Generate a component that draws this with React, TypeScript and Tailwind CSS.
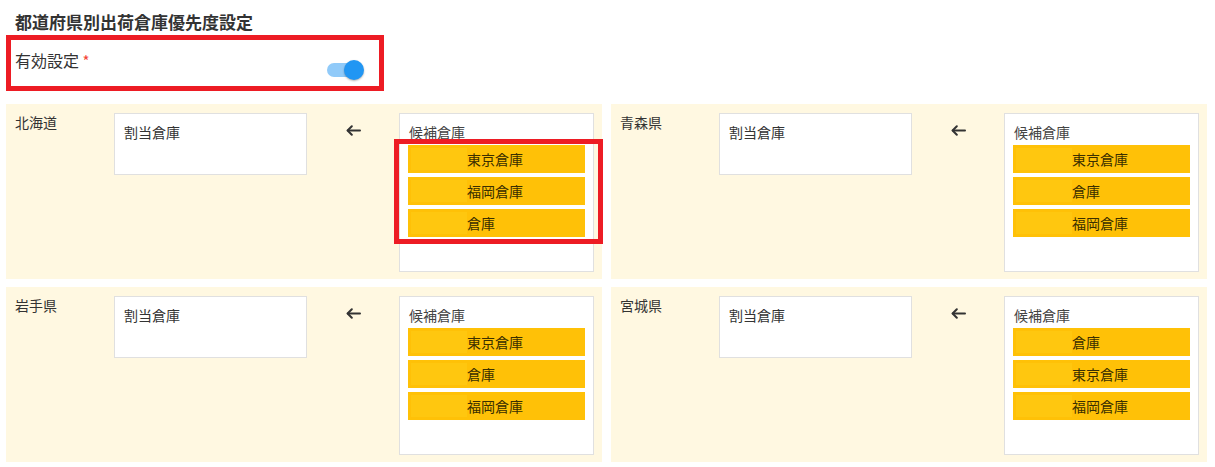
const font = "font-['Noto_Sans_CJK_JP','Noto_Sans',sans-serif]";

type Pref = { name: string; candidates: string[] };

const prefs: Pref[] = [
  { name: "北海道", candidates: ["東京倉庫", "福岡倉庫", "倉庫"] },
  { name: "青森県", candidates: ["東京倉庫", "倉庫", "福岡倉庫"] },
  { name: "岩手県", candidates: ["東京倉庫", "倉庫", "福岡倉庫"] },
  { name: "宮城県", candidates: ["倉庫", "東京倉庫", "福岡倉庫"] },
];

function ArrowLeft() {
  return (
    <svg width="15" height="11" viewBox="0 0 15 11" fill="none" stroke="#333" strokeWidth="2" strokeLinecap="round" strokeLinejoin="round">
      <path d="M14 5.5H1.8" />
      <path d="M5.8 1.3 1.6 5.5l4.2 4.2" />
    </svg>
  );
}

function Toggle() {
  return (
    <div className="relative w-[37px] h-[20px]">
      <div className="absolute left-0 top-[3px] w-[34px] h-[14px] rounded-full bg-[#90caf9]" />
      <div className="absolute right-0 top-0 w-5 h-5 rounded-full bg-[#2196f3] shadow-[0_1px_2px_rgba(0,0,0,0.3)]" />
    </div>
  );
}

function PrefPanel({ pref }: { pref: Pref }) {
  return (
    <div className="h-[175px] bg-[#fff8e1] pl-[9px] pt-[9px] grid grid-cols-[99px_193px_92px_195px] items-start">
      <div className="text-[14px] leading-[18px] text-[#333]">{pref.name}</div>
      <div className="h-[62px] bg-white border border-[#e0e0e0] px-[9px] pt-[8px] text-[14px] leading-[20px] text-[#333]">
        割当倉庫
      </div>
      <div className="flex justify-center pt-[12px]">
        <ArrowLeft />
      </div>
      <div className="h-[159px] bg-white border border-[#e0e0e0] px-[8px] pt-[8px]">
        <div className="pl-[1px] text-[14px] leading-[20px] text-[#444]">候補倉庫</div>
        <div className="mt-[3px] flex flex-col gap-[4px]">
          {pref.candidates.map((c, i) => (
            <div key={i} className="h-[28px] bg-[#ffc107] flex items-center pl-[3px]">
              <div className="w-[56px] h-[22px] bg-[#ffc70f]" />
              <span className="text-[14px] leading-[20px] text-[#3a2f00]">{c}</span>
            </div>
          ))}
        </div>
      </div>
    </div>
  );
}

export default function App() {
  return (
    <div className={`relative w-[1215px] h-[467px] bg-white ${font}`}>
      <div className="h-[35px] pl-[15px] pt-[10px] text-[17px] leading-[24px] font-bold text-[#333]">
        都道府県別出荷倉庫優先度設定
      </div>

      <div className="ml-[6px] w-[378px] h-[56px] border-[5px] border-[#ed1c24] flex items-start pl-[4px] pr-[15px]">
        <div className="pt-[10px] text-[16px] leading-[20px] text-[#333]">
          有効設定 <span className="text-[#f44336] text-[15px]">*</span>
        </div>
        <div className="ml-auto mt-[20px]">
          <Toggle />
        </div>
      </div>

      <div className="mt-[13px] px-[6px] grid grid-cols-[596px_596px] gap-x-[9px] gap-y-[8px]">
        {prefs.map((p) => (
          <PrefPanel key={p.name} pref={p} />
        ))}
      </div>

      {/* annotation frame around the first candidate list */}
      <div className="absolute left-[394px] top-[139px] w-[209px] h-[105px] border-[5px] border-[#ed1c24]" />
    </div>
  );
}
